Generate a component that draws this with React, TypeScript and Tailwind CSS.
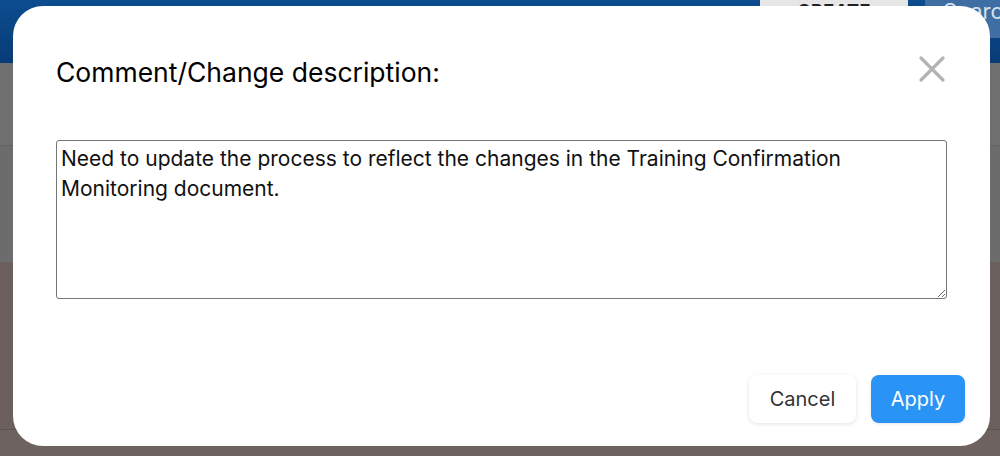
import React from "react";
import { X } from "lucide-react";

function Backdrop() {
  return (
    <div className="flex h-[456px] flex-col overflow-hidden">
      <div className="flex h-[63px] shrink-0 items-start bg-gradient-to-b from-[#0c4d8f] to-[#083b76]">
        <div className="flex-1" />
        <div className="flex h-[38px] w-[148px] justify-center bg-[#e6e6e6] pt-[1px] text-[18px] font-bold leading-[20px] tracking-wide text-[#222]">
          CREATE
        </div>
        <div className="ml-[17px] h-[38px] w-[75px] overflow-hidden whitespace-nowrap bg-[#3e6ea3] pl-[18px] text-[22px] leading-[22px] text-[#d5e0ec]">
          Search
        </div>
      </div>
      <div className="h-[83px] shrink-0 border-b border-[#616161] bg-[#6f6f6f]" />
      <div className="h-[116px] shrink-0 bg-[#6c6c6c]" />
      <div className="h-[168px] shrink-0 border-b border-[#5c5352] bg-[#6c605f]" />
      <div className="flex-1 bg-[#6e6261]" />
    </div>
  );
}

function CommentModal() {
  return (
    <div className="absolute inset-0 flex items-start justify-start pl-[13px] pt-[6px]">
      <div className="flex h-[440px] w-[977px] flex-col rounded-[30px] bg-white px-[43px] pb-[23px] pt-[51px]">
        <div className="flex h-[30px] items-center justify-between">
          <h2 className="text-[26.5px] leading-[30px] text-black">Comment/Change description:</h2>
          <button className="-mr-[7px] mb-[6px] text-[#b3b3b3]">
            <X size={44} strokeWidth={1.75} />
          </button>
        </div>
        <textarea
          className="mt-[53px] h-[159px] w-full rounded-[3px] border border-[#767676] px-[4px] py-[3px] text-[21px] leading-[30px] text-[#111] outline-none"
          defaultValue="Need to update the process to reflect the changes in the Training Confirmation Monitoring document."
        />
        <div className="mt-auto -mr-[18px] flex justify-end gap-[15px]">
          <button className="h-[48px] w-[107px] rounded-[8px] bg-white text-[20px] text-[#333] shadow-[0_1px_4px_rgba(0,0,0,0.12)]">
            Cancel
          </button>
          <button className="h-[48px] w-[94px] rounded-[8px] bg-[#2994f6] text-[20px] text-white shadow-[0_1px_3px_rgba(0,0,0,0.1)]">
            Apply
          </button>
        </div>
      </div>
    </div>
  );
}

export default function App() {
  return (
    <div className="relative h-[456px] w-[1000px] overflow-hidden font-['Inter','Noto_Sans',sans-serif]">
      <Backdrop />
      <CommentModal />
    </div>
  );
}
